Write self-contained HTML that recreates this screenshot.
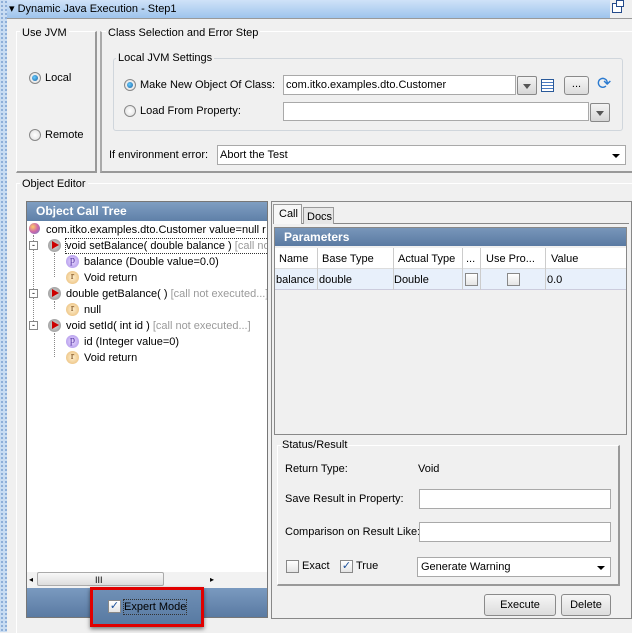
<!DOCTYPE html>
<html><head><meta charset="utf-8"><style>
*{box-sizing:border-box}
body{margin:0;width:632px;height:632px;overflow:hidden;background:#f0f0f0;font-family:"Liberation Sans",sans-serif;font-size:11px;color:#000;position:relative}
.a{position:absolute}
.t{position:absolute;white-space:nowrap;line-height:14px}
.inp{position:absolute;background:#fff;border:1px solid #a9a9a9}
.btn{position:absolute;border:1px solid #8a8a8a;border-radius:3px;background:linear-gradient(#f6f6f6,#dcdcdc);text-align:center;line-height:20px}
.radio{position:absolute;width:12px;height:12px;border-radius:50%;border:1px solid #888;background:radial-gradient(#fff,#ddd)}
.radio.on::after{content:"";position:absolute;left:2px;top:2px;width:6px;height:6px;border-radius:50%;background:radial-gradient(circle at 40% 40%,#6cf,#1a5fa0)}
.cb{position:absolute;width:13px;height:13px;border:1px solid #888;background:linear-gradient(#fff,#e4e4e4)}
.dd{position:absolute;width:20px;height:19px;border:1px solid #888;border-radius:2px;background:linear-gradient(#f3f3f3,#d6d6d6)}
.dd::after{content:"";position:absolute;left:5px;top:7px;border:4px solid transparent;border-top:5px solid #555}
.ic{position:absolute;width:13px;height:13px;border-radius:50%;font-size:10px;line-height:12px;text-align:center;font-family:"Liberation Serif",serif}
.p{background:radial-gradient(#e8d8ff,#a88ee8);color:#5030a0}
.r{background:radial-gradient(#fff0d0,#e8b870);color:#704010}
.m{background:radial-gradient(#ddd,#8a8a8a)}
.m::after{content:"";position:absolute;left:4px;top:2px;border:4px solid transparent;border-left:7px solid #c00}
.gray{color:#9a9a9a}
.tree{position:absolute;left:0;top:0;width:632px;height:632px;clip-path:inset(221px 365px 60px 27px)}
</style></head><body>
<div class="a" style="left:0;top:0;width:7px;height:632px;background:#c8dcf2;background-image:radial-gradient(#7aa0d0 0.8px,transparent 1px);background-size:4px 4px"></div>
<div class="a" style="left:7px;top:0;width:603px;height:18px;background:linear-gradient(#cfe2f8,#9ec4ec)"></div>
<div class="t" style="left:9px;top:2px">▾ Dynamic Java Execution - Step1</div>
<div class="a" style="left:612px;top:3px;width:10px;height:10px;border:1px solid #244a8a;background:#fff"></div>
<div class="a" style="left:616px;top:0px;width:8px;height:7px;border:1px solid #244a8a;background:#fff"></div>
<div class="a" style="left:7px;top:18px;width:625px;height:1px;background:#999"></div>

<div class="a" style="left:16px;top:31px;width:81px;height:142px;border:1px solid #fff;border-right:2px solid #999;border-bottom:2px solid #999"></div>
<div class="t" style="left:20px;top:26px;background:#f0f0f0;padding:0 2px">Use JVM</div>
<div class="radio on" style="left:29px;top:72px"></div><div class="t" style="left:45px;top:71px">Local</div>
<div class="radio" style="left:29px;top:129px"></div><div class="t" style="left:45px;top:128px">Remote</div>

<div class="a" style="left:100px;top:31px;width:540px;height:142px;border:1px solid #fff;border-bottom:2px solid #999;border-left:2px solid #aaa"></div>
<div class="t" style="left:106px;top:26px;background:#f0f0f0;padding:0 2px">Class Selection and Error Step</div>
<div class="a" style="left:113px;top:58px;width:510px;height:73px;border:1px solid #d0d6dc;border-radius:3px"></div>
<div class="t" style="left:116px;top:51px;background:#f0f0f0;padding:0 2px">Local JVM Settings</div>
<div class="radio on" style="left:124px;top:79px"></div><div class="t" style="left:140px;top:78px">Make New Object Of Class:</div>
<div class="inp" style="left:283px;top:75px;width:233px;height:20px"></div><div class="t" style="left:286px;top:78px">com.itko.examples.dto.Customer</div>
<div class="dd" style="left:517px;top:76px"></div>
<div class="a" style="left:541px;top:79px;width:13px;height:13px;border:1px solid #2a5a9a;background:repeating-linear-gradient(#fff 0 2px,#4a7ac0 2px 3px)"></div>
<div class="btn" style="left:564px;top:76px;width:25px;height:19px;line-height:14px">...</div>
<div class="t" style="left:597px;top:75px;color:#2a7ad0;font-size:17px;line-height:18px">⟳</div>
<div class="radio" style="left:124px;top:105px"></div><div class="t" style="left:140px;top:104px">Load From Property:</div>
<div class="inp" style="left:283px;top:102px;width:306px;height:19px"></div>
<div class="dd" style="left:590px;top:103px"></div>
<div class="t" style="left:109px;top:148px">If environment error:</div>
<div class="inp" style="left:217px;top:145px;width:409px;height:20px"></div><div class="t" style="left:220px;top:148px">Abort the Test</div>
<div class="a" style="left:612px;top:154px;border:4px solid transparent;border-top:4px solid #000"></div>

<div class="a" style="left:16px;top:183px;width:620px;height:450px;border-top:1px solid #fff;border-left:1px solid #fff"></div>
<div class="t" style="left:20px;top:177px;background:#f0f0f0;padding:0 2px">Object Editor</div>

<div class="a" style="left:26px;top:201px;width:242px;height:417px;border:1px solid #777;background:#fff"></div>
<div class="a" style="left:27px;top:202px;width:240px;height:19px;background:linear-gradient(#7f9ec2,#5f80a8)"></div>
<div class="t" style="left:36px;top:204px;color:#fff;font-weight:bold;font-size:12px">Object Call Tree</div>
<div class="tree">
<div class="a" style="left:29px;top:223px;width:11px;height:11px;border-radius:50%;background:radial-gradient(circle at 35% 35%,#fc6,#c6a,#68c)"></div>
<div class="t" style="left:46px;top:223px">com.itko.examples.dto.Customer value=null r</div>
<div class="a" style="left:33px;top:235px;width:1px;height:90px;border-left:1px dotted #888"></div>
<div class="a" style="left:54px;top:253px;width:1px;height:24px;border-left:1px dotted #888"></div>
<div class="a" style="left:54px;top:301px;width:1px;height:8px;border-left:1px dotted #888"></div>
<div class="a" style="left:54px;top:333px;width:1px;height:24px;border-left:1px dotted #888"></div>
<div class="a" style="left:29px;top:241px;width:9px;height:9px;border:1px solid #888;background:#fff;font-size:9px;line-height:6px;text-align:center">-</div>
<div class="a" style="left:29px;top:289px;width:9px;height:9px;border:1px solid #888;background:#fff;font-size:9px;line-height:6px;text-align:center">-</div>
<div class="a" style="left:29px;top:321px;width:9px;height:9px;border:1px solid #888;background:#fff;font-size:9px;line-height:6px;text-align:center">-</div>
<div class="ic m" style="left:48px;top:239px"></div>
<div class="a" style="left:65px;top:238px;width:204px;height:16px;border:1px dotted #333"></div>
<div class="t" style="left:66px;top:239px">void setBalance( double balance ) <span class="gray">[call not</span></div>
<div class="ic p" style="left:66px;top:255px">p</div><div class="t" style="left:84px;top:255px">balance (Double value=0.0)</div>
<div class="ic r" style="left:66px;top:271px">r</div><div class="t" style="left:84px;top:271px">Void return</div>
<div class="ic m" style="left:48px;top:287px"></div>
<div class="t" style="left:66px;top:287px">double getBalance( ) <span class="gray">[call not executed...]</span></div>
<div class="ic r" style="left:66px;top:303px">r</div><div class="t" style="left:84px;top:303px">null</div>
<div class="ic m" style="left:48px;top:319px"></div>
<div class="t" style="left:66px;top:319px">void setId( int id ) <span class="gray">[call not executed...]</span></div>
<div class="ic p" style="left:66px;top:335px">p</div><div class="t" style="left:84px;top:335px">id (Integer value=0)</div>
<div class="ic r" style="left:66px;top:351px">r</div><div class="t" style="left:84px;top:351px">Void return</div>
</div>
<div class="a" style="left:27px;top:572px;width:240px;height:16px;background:#f2f2f2"></div>
<div class="a" style="left:37px;top:572px;width:127px;height:14px;border:1px solid #aaa;border-radius:2px;background:linear-gradient(#f8f8f8,#ddd)"></div>
<div class="t" style="left:95px;top:573px;font-size:9px">III</div>
<div class="t" style="left:29px;top:573px;font-size:8px">◂</div>
<div class="t" style="left:210px;top:573px;font-size:8px">▸</div>
<div class="a" style="left:27px;top:588px;width:240px;height:29px;background:linear-gradient(#7a9ac0,#5a7aa2)"></div>
<div class="a" style="left:90px;top:587px;width:114px;height:40px;border:3px solid #e00000;background:linear-gradient(#6f8fb5,#587aa2);box-shadow:0 2px 4px rgba(0,0,0,.5)"></div>
<div class="cb" style="left:108px;top:600px;color:#1a4f9a;font-size:11px;line-height:11px;text-align:center">✓</div>
<div class="t" style="left:123px;top:599px;border:1px dotted #333">Expert Mode</div>

<div class="a" style="left:271px;top:201px;width:361px;height:418px;border:1px solid #888"></div>
<div class="a" style="left:273px;top:223px;width:356px;height:1px;background:#888"></div>
<div class="a" style="left:273px;top:204px;width:29px;height:20px;border:1px solid #999;border-bottom:none;background:#f7f7f7"></div>
<div class="t" style="left:279px;top:207px">Call</div>
<div class="a" style="left:303px;top:207px;width:31px;height:17px;border:1px solid #999;border-bottom:none;background:#e6e6e6"></div>
<div class="t" style="left:307px;top:210px">Docs</div>
<div class="a" style="left:274px;top:227px;width:353px;height:208px;border:1px solid #888;background:#f0f0f0"></div>
<div class="a" style="left:275px;top:228px;width:351px;height:18px;background:linear-gradient(#7896ba,#5a7aa2)"></div>
<div class="t" style="left:284px;top:230px;color:#fff;font-weight:bold;font-size:12px">Parameters</div>
<div class="a" style="left:275px;top:248px;width:351px;height:21px;background:#fff;border-bottom:1px solid #ddd"></div>
<div class="a" style="left:275px;top:269px;width:351px;height:21px;background:#e8f0fb;border-bottom:1px solid #ccd"></div>
<div class="a" style="left:317px;top:248px;width:1px;height:42px;background:#ccc"></div>
<div class="a" style="left:393px;top:248px;width:1px;height:42px;background:#ccc"></div>
<div class="a" style="left:462px;top:248px;width:1px;height:42px;background:#ccc"></div>
<div class="a" style="left:480px;top:248px;width:1px;height:42px;background:#ccc"></div>
<div class="a" style="left:545px;top:248px;width:1px;height:42px;background:#ccc"></div>
<div class="t" style="left:279px;top:252px">Name</div>
<div class="t" style="left:322px;top:252px">Base Type</div>
<div class="t" style="left:398px;top:252px">Actual Type</div>
<div class="t" style="left:466px;top:252px">...</div>
<div class="t" style="left:486px;top:252px">Use Pro...</div>
<div class="t" style="left:551px;top:252px">Value</div>
<div class="t" style="left:276px;top:273px">balance</div>
<div class="t" style="left:319px;top:273px">double</div>
<div class="t" style="left:394px;top:273px">Double</div>
<div class="cb" style="left:465px;top:273px"></div>
<div class="cb" style="left:507px;top:273px"></div>
<div class="t" style="left:547px;top:273px">0.0</div>

<div class="a" style="left:277px;top:445px;width:343px;height:141px;border:1px solid #fff;border-right:2px solid #999;border-bottom:2px solid #999"></div>
<div class="t" style="left:281px;top:438px;background:#f0f0f0;padding:0 1px">Status/Result</div>
<div class="t" style="left:285px;top:462px">Return Type:</div>
<div class="t" style="left:418px;top:462px">Void</div>
<div class="t" style="left:285px;top:492px">Save Result in Property:</div>
<div class="inp" style="left:419px;top:489px;width:192px;height:20px"></div>
<div class="t" style="left:285px;top:525px">Comparison on Result Like:</div>
<div class="inp" style="left:419px;top:522px;width:192px;height:20px"></div>
<div class="cb" style="left:286px;top:560px"></div><div class="t" style="left:302px;top:559px">Exact</div>
<div class="cb" style="left:340px;top:560px;color:#1a4f9a;font-size:11px;line-height:11px;text-align:center">✓</div><div class="t" style="left:356px;top:559px">True</div>
<div class="inp" style="left:417px;top:557px;width:194px;height:20px"></div><div class="t" style="left:421px;top:560px">Generate Warning</div>
<div class="a" style="left:597px;top:566px;border:4px solid transparent;border-top:4px solid #000"></div>
<div class="btn" style="left:484px;top:594px;width:72px;height:22px">Execute</div>
<div class="btn" style="left:561px;top:594px;width:50px;height:22px">Delete</div>
</body></html>
